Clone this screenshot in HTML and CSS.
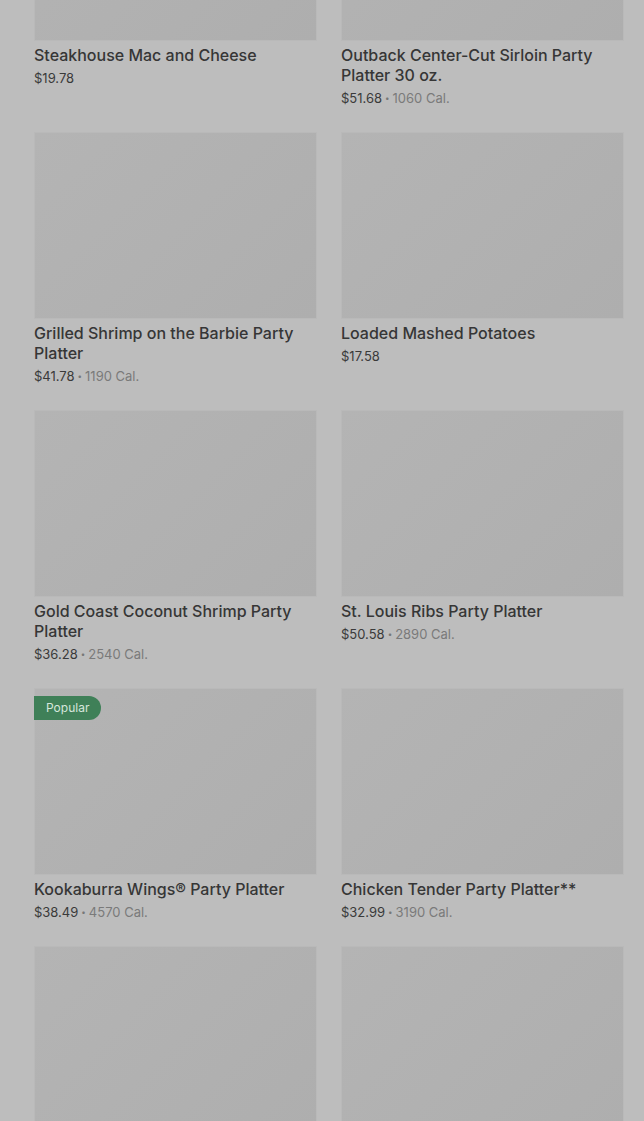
FILE: index.html
```html
<!DOCTYPE html>
<html lang="en">
<head>
  <meta charset="UTF-8">
  <meta name="viewport" content="width=device-width, initial-scale=1.0">
  <title>Party Platters</title>
  <link rel="stylesheet" href="styles.css">
</head>
<body>

  <!-- Menu grid (page scrolled, backdrop dimmed) -->
  <main class="menu">

    <div class="item">
      <div class="photo"></div>
      <h3 class="name">Steakhouse Mac and Cheese</h3>
      <p class="meta"><span class="price">$19.78</span></p>
    </div>

    <div class="item">
      <div class="photo"></div>
      <h3 class="name">Outback Center-Cut Sirloin Party Platter 30 oz.</h3>
      <p class="meta"><span class="price">$51.68</span><span class="dot">•</span><span class="cal">1060 Cal.</span></p>
    </div>

    <div class="item">
      <div class="photo"></div>
      <h3 class="name">Grilled Shrimp on the Barbie Party Platter</h3>
      <p class="meta"><span class="price">$41.78</span><span class="dot">•</span><span class="cal">1190 Cal.</span></p>
    </div>

    <div class="item">
      <div class="photo"></div>
      <h3 class="name">Loaded Mashed Potatoes</h3>
      <p class="meta"><span class="price">$17.58</span></p>
    </div>

    <div class="item">
      <div class="photo"></div>
      <h3 class="name">Gold Coast Coconut Shrimp Party Platter</h3>
      <p class="meta"><span class="price">$36.28</span><span class="dot">•</span><span class="cal">2540 Cal.</span></p>
    </div>

    <div class="item">
      <div class="photo"></div>
      <h3 class="name">St. Louis Ribs Party Platter</h3>
      <p class="meta"><span class="price">$50.58</span><span class="dot">•</span><span class="cal">2890 Cal.</span></p>
    </div>

    <div class="item">
      <div class="photo">
        <span class="badge">Popular</span>
      </div>
      <h3 class="name">Kookaburra Wings® Party Platter</h3>
      <p class="meta"><span class="price">$38.49</span><span class="dot">•</span><span class="cal">4570 Cal.</span></p>
    </div>

    <div class="item">
      <div class="photo"></div>
      <h3 class="name">Chicken Tender Party Platter**</h3>
      <p class="meta"><span class="price">$32.99</span><span class="dot">•</span><span class="cal">3190 Cal.</span></p>
    </div>

    <div class="item">
      <div class="photo"></div>
    </div>

    <div class="item">
      <div class="photo"></div>
    </div>

  </main>

</body>
</html>
```

FILE: styles.css
```css
/* General Reset */
* {
  margin: 0;
  padding: 0;
  box-sizing: border-box;
}

body {
  font-family: Inter, "Open Sans", Arial, sans-serif;
  background-color: #bdbdbd;
  color: #333;
  overflow: hidden;
}

/* grid is scrolled up, first row photos are cut off */
.menu {
  display: grid;
  grid-template-columns: 283px 283px;
  column-gap: 24px;
  row-gap: 24px;
  padding: 0 20px 0 34px;
  margin-top: -146px;
}

.photo {
  position: relative;
  height: 187px;
  border: 1px solid #b9b9b9;
  background: linear-gradient(135deg, #b4b4b4, #aeaeae);
}

.badge {
  position: absolute;
  top: 7px;
  left: -1px;
  height: 24px;
  padding: 0 12px;
  line-height: 24px;
  font-size: 12px;
  color: #d6e6dc;
  background: #3f8058;
  border-radius: 0 12px 12px 0;
}

.name {
  margin-top: 4px;
  font-size: 16px;
  font-weight: 500;
  line-height: 20px;
  color: #363636;
}

.meta {
  display: flex;
  align-items: center;
  height: 20px;
  margin-top: 3px;
  font-size: 13px;
  line-height: 20px;
}

.price {
  color: #3a3a3a;
}

.dot {
  margin: 0 3px;
  font-size: 8px;
  color: #777;
}

.cal {
  color: #7a7a7a;
}
```
